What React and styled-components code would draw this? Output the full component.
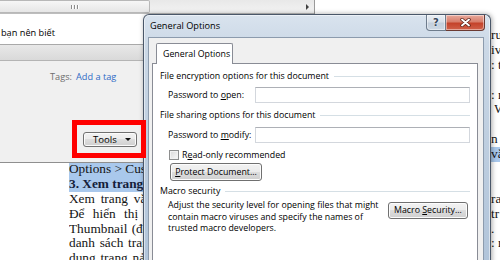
import React from "react";
import styled, { createGlobalStyle, css } from "styled-components";

const uiFont = `"Open Sans", "Noto Sans", "Liberation Sans", sans-serif`;

const GlobalStyle = createGlobalStyle`
  html, body {
    margin: 0;
    padding: 0;
    background: #fff;
  }
  body {
    width: 500px;
    height: 260px;
    overflow: hidden;
  }
  * {
    box-sizing: border-box;
  }
`;

const Screen = styled.div`
  position: relative;
  width: 500px;
  height: 260px;
  overflow: hidden;
  background: #fff;
`;

/* ---------- the Word page behind the windows ---------- */
const Page = styled.div`
  padding-top: 28px;
  font-family: "Liberation Serif", "Times New Roman", serif;
  font-size: 13.3px;
  line-height: 14.9px;
  color: #141414;
`;

// left margin | start of the line (rest is under the dialog) | end of the line
const TextLine = styled.div`
  display: grid;
  grid-template-columns: 69px 76px 346px 40px;
  height: 14.9px;
  white-space: nowrap;
`;

const LeftWords = styled.span`
  grid-column: 2;
  overflow: hidden;
  word-spacing: ${(p) => p.$spacing || 0}px;
  ${(p) =>
    p.$selected &&
    css`
      background: #a9c8ec;
    `}
  ${(p) =>
    p.$heading &&
    css`
      font-weight: 700;
      color: #14203a;
    `}
`;

const RightWords = styled.span`
  grid-column: 4;
  justify-self: start;
  ${(p) =>
    p.$selected &&
    css`
      background: #a9c8ec;
      padding-right: 10px;
    `}
`;

/* ---------- Save As window (behind) ---------- */
const SavePanel = styled.div`
  position: absolute;
  left: 0;
  top: 0;
  width: 315px;
  height: 163px;
  display: flex;
  flex-direction: column;
  background: #f0f0f0;
  border-bottom: 1px solid #8f8f8f;
  border-right: 1px solid #9a9a9a;
  font-family: ${uiFont};
  font-size: 9.2px;
  color: #000;
`;

const HScroll = styled.div`
  display: flex;
  height: 14px;
  background: linear-gradient(#e8e8e8, #f3f3f3);
  border-bottom: 1px solid #bdbdbd;
`;

const ScrollThumb = styled.div`
  width: 150px;
  display: flex;
  align-items: center;
  justify-content: center;
  gap: 1px;
  background: linear-gradient(#f7f7f7, #e6e6e6);
  border: 1px solid #b8b8b8;
  border-left: none;
  border-radius: 0 2px 2px 0;
`;

const Grip = styled.i`
  width: 2px;
  height: 4px;
  border-left: 1px solid #8c8c8c;
  border-right: 1px solid #fff;
`;

const ScrollTrack = styled.div`
  flex: 1;
`;

const ScrollArrow = styled.div`
  width: 13px;
  display: flex;
  align-items: center;
  justify-content: center;
  &::after {
    content: "";
    border-left: 3px solid #404040;
    border-top: 3px solid transparent;
    border-bottom: 3px solid transparent;
  }
`;

const NameRow = styled.div`
  height: 31px;
  display: flex;
  align-items: flex-end;
  padding: 0 0 5px 1px;
  background: #fff;
  border-bottom: 1px solid #a9a9a9;
`;

const TypeRow = styled.div`
  height: 16px;
  background: linear-gradient(#e8e8e8, #d9d9d9);
  border-bottom: 1px solid #b4b4b4;
`;

const PanelBody = styled.div`
  flex: 1;
  display: flex;
  flex-direction: column;
  align-items: flex-start;
  padding: 10px 0 0 50px;
`;

const TagsRow = styled.div`
  line-height: 12px;
  color: #6d6d6d;
`;

const TagLink = styled.span`
  margin-left: 4px;
  color: #2e6bc6;
`;

const ToolsButton = styled.div`
  margin: 49px 0 0 33px;
  width: 54px;
  height: 15px;
  display: flex;
  align-items: center;
  padding: 0 5px 1px 9px;
  border: 1px solid #707070;
  border-radius: 3px;
  background: linear-gradient(#f2f2f2 0%, #ebebeb 50%, #dddddd 50%, #cfcfcf 100%);
  box-shadow: inset 0 0 0 1px #fbfbfb;
  font-size: 9.6px;
  &::after {
    content: "";
    margin-left: auto;
    border-top: 3px solid #111;
    border-left: 3px solid transparent;
    border-right: 3px solid transparent;
  }
`;

/* ---------- General Options dialog ---------- */
const Dialog = styled.div`
  position: absolute;
  left: 143px;
  top: 14px;
  width: 348px;
  height: 262px;
  display: flex;
  flex-direction: column;
  padding: 0 6px 0 4px;
  border: 1px solid #4a5769;
  border-bottom: none;
  border-radius: 6px 6px 0 0;
  background: linear-gradient(180deg, #d9e3ee 0%, #cbd8e6 12%, #bfcfe0 45%, #afc3d9 100%);
  box-shadow: 1px 0 5px rgba(0, 0, 0, 0.35), inset 0 0 0 1px rgba(255, 255, 255, 0.5);
  font-family: ${uiFont};
  font-size: 8.8px;
  color: #000;
`;

const TitleBar = styled.div`
  display: flex;
  height: 22px;
`;

const Title = styled.div`
  align-self: center;
  padding: 0 0 2px 2px;
  font-size: 9.2px;
`;

const Captions = styled.div`
  display: flex;
  margin-left: auto;
  margin-right: -1px;
  align-self: flex-start;
`;

const CaptionButton = styled.div`
  width: ${(p) => p.$w}px;
  height: 16px;
  display: flex;
  align-items: center;
  justify-content: center;
  border: 1px solid ${(p) => (p.$close ? "#6b3a32" : "#6e7c8c")};
  border-top: none;
  border-left-width: ${(p) => (p.$close ? 0 : 1)}px;
  border-radius: ${(p) => (p.$close ? "0 0 4px 0" : "0 0 0 4px")};
  background: ${(p) =>
    p.$close
      ? "linear-gradient(#e9a99c 0%, #d77e6b 45%, #c4432b 55%, #d0614a 100%)"
      : "linear-gradient(#e9eef4 0%, #d8e0e9 45%, #c3cfdc 55%, #cdd8e4 100%)"};
  box-shadow: inset 0 0 0 1px rgba(255, 255, 255, 0.45);
`;

const HelpMark = styled.span`
  font-family: "DejaVu Sans", sans-serif;
  font-weight: 700;
  font-size: 10px;
  color: #37475b;
  text-shadow: 0 0 2px #fff;
`;

const Client = styled.div`
  flex: 1;
  display: flex;
  flex-direction: column;
  padding: 5px 5px 0 3px;
  background: #f0f0f0;
  border: 1px solid #8c9bad;
  border-bottom: none;
`;

const TabStrip = styled.div`
  display: flex;
  padding-left: 4px;
`;

const Tab = styled.div`
  position: relative;
  z-index: 1;
  width: 77px;
  height: 21px;
  margin-bottom: -1px;
  display: flex;
  align-items: center;
  padding: 0 0 1px 6px;
  background: #fff;
  border: 1px solid #898c95;
  border-bottom: none;
  border-radius: 2px 2px 0 0;
`;

const TabPanel = styled.div`
  flex: 1;
  display: flex;
  flex-direction: column;
  padding: 0 7px;
  background: #fff;
  border: 1px solid #898c95;
  border-bottom: none;
`;

const SectionTitle = styled.div`
  display: flex;
  align-items: center;
  height: 12px;
  margin-top: ${(p) => p.$top}px;
  &::after {
    content: "";
    flex: 1;
    height: 1px;
    margin-left: 5px;
    background: #d5dfe5;
  }
`;

const FieldRow = styled.div`
  display: grid;
  grid-template-columns: 95px 1fr;
  align-items: center;
  height: 16px;
  margin-top: ${(p) => p.$top}px;
`;

const FieldLabel = styled.label`
  padding-left: 8px;
`;

const TextBox = styled.div`
  height: 16px;
  background: #fff;
  border: 1px solid #d3d7dd;
  border-top-color: #adb0b6;
`;

const CheckRow = styled.div`
  display: flex;
  align-items: center;
  gap: 3px;
  height: 12px;
  margin-top: 6px;
  padding-left: 9px;
`;

const CheckBox = styled.span`
  width: 10px;
  height: 10px;
  border: 1px solid #8e8f8f;
  background: linear-gradient(135deg, #d9d9d9, #fafafa);
  box-shadow: inset 0 0 0 1px #f2f2f2;
`;

const PushButton = styled.div`
  width: ${(p) => p.$w}px;
  height: ${(p) => p.$h}px;
  margin: ${(p) => p.$margin};
  flex-shrink: 0;
  display: flex;
  align-items: center;
  justify-content: center;
  padding-bottom: 1px;
  border: 1px solid #707070;
  border-radius: 3px;
  background: linear-gradient(#f2f2f2 0%, #ebebeb 50%, #dddddd 50%, #cfcfcf 100%);
  box-shadow: inset 0 0 0 1px #fcfcfc;
`;

const MacroRow = styled.div`
  display: flex;
  align-items: flex-start;
  margin-top: 3px;
`;

const MacroText = styled.p`
  flex: 1;
  margin: 0;
  padding-left: 8px;
  line-height: 11.7px;
  white-space: nowrap;
`;

/* ---------- red highlight drawn on the screenshot ---------- */
const Marker = styled.div`
  position: absolute;
  left: 72px;
  top: 120px;
  width: 74px;
  height: 38px;
  border: 5px solid #ff0000;
  z-index: 5;
`;

const docLines = [
  { right: "ru" },
  { right: "iv" },
  { right: ": t" },
  {},
  { right: ": n" },
  { right: "\u00a0W" },
  {},
  { right: "n" },
  { right: "vă", rightSelected: true },
  { left: "Options > Customize Ribbon", selected: true },
  { left: "3. Xem trang văn bản thu nhỏ", selected: true, heading: true },
  { left: "Xem trang văn bản", spacing: 2.5, right: "ra" },
  { left: "Để hiển thị trang", spacing: 5, right: "tr" },
  { left: "Thumbnail (đó là", spacing: 1, right: "." },
  { left: "danh sách trang", spacing: 1.5, right: ": r" },
  { left: "dung trang nảy", spacing: 1.5 },
];

function CloseGlyph() {
  return (
    <svg width="11" height="9" viewBox="0 0 11 9">
      <path d="M2 1.5 L9 7.5 M9 1.5 L2 7.5" stroke="#5a2018" strokeWidth="3.4" strokeLinecap="round" />
      <path d="M2 1.5 L9 7.5 M9 1.5 L2 7.5" stroke="#fff" strokeWidth="1.9" strokeLinecap="round" />
    </svg>
  );
}

export default function App() {
  return (
    <Screen>
      <GlobalStyle />

      <Page>
        {docLines.map((line, i) => (
          <TextLine key={i}>
            <LeftWords $selected={line.selected} $heading={line.heading} $spacing={line.spacing}>
              {line.left}
            </LeftWords>
            <RightWords $selected={line.rightSelected}>{line.right}</RightWords>
          </TextLine>
        ))}
      </Page>

      <SavePanel>
        <HScroll>
          <ScrollThumb>
            <Grip />
            <Grip />
            <Grip />
          </ScrollThumb>
          <ScrollTrack />
          <ScrollArrow />
        </HScroll>
        <NameRow>bạn nên biết</NameRow>
        <TypeRow />
        <PanelBody>
          <TagsRow>
            Tags:<TagLink>Add a tag</TagLink>
          </TagsRow>
          <ToolsButton>Tools</ToolsButton>
        </PanelBody>
      </SavePanel>

      <Dialog>
        <TitleBar>
          <Title>General Options</Title>
          <Captions>
            <CaptionButton $w={20}>
              <HelpMark>?</HelpMark>
            </CaptionButton>
            <CaptionButton $w={39} $close>
              <CloseGlyph />
            </CaptionButton>
          </Captions>
        </TitleBar>

        <Client>
          <TabStrip>
            <Tab>General Options</Tab>
          </TabStrip>
          <TabPanel>
            <SectionTitle $top={6}>File encryption options for this document</SectionTitle>
            <FieldRow $top={5}>
              <FieldLabel>
                Password to <u>o</u>pen:
              </FieldLabel>
              <TextBox />
            </FieldRow>

            <SectionTitle $top={6}>File sharing options for this document</SectionTitle>
            <FieldRow $top={6}>
              <FieldLabel>
                Password to <u>m</u>odify:
              </FieldLabel>
              <TextBox />
            </FieldRow>
            <CheckRow>
              <CheckBox />
              <span>
                R<u>e</u>ad-only recommended
              </span>
            </CheckRow>
            <PushButton $w={92} $h={18} $margin="2px 0 0 10px">
              <span>
                <u>P</u>rotect Document...
              </span>
            </PushButton>

            <SectionTitle $top={4}>Macro security</SectionTitle>
            <MacroRow>
              <MacroText>
                Adjust the security level for opening files that might
                <br />
                contain macro viruses and specify the names of
                <br />
                trusted macro developers.
              </MacroText>
              <PushButton $w={80} $h={17} $margin="2px 2px 0 0">
                <span>
                  Macro <u>S</u>ecurity...
                </span>
              </PushButton>
            </MacroRow>
          </TabPanel>
        </Client>
      </Dialog>

      <Marker />
    </Screen>
  );
}
